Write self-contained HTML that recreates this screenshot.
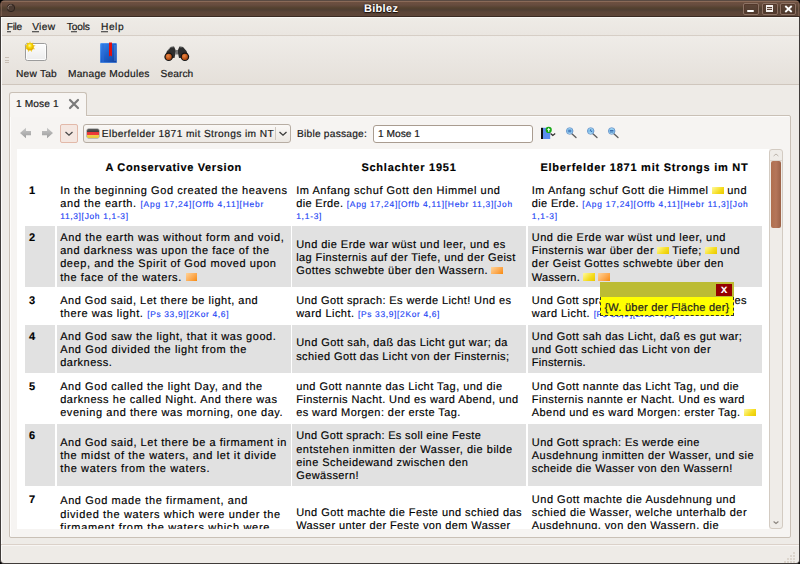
<!DOCTYPE html>
<html><head><meta charset="utf-8"><title>Biblez</title><style>
*{margin:0;padding:0;box-sizing:border-box}
html{background:#000}html,body{width:800px;height:564px;overflow:hidden}
body{position:relative;text-rendering:geometricPrecision;background:#000;font-family:"Liberation Sans",sans-serif;color:#1e1e1e}
.a{position:absolute}
.l{position:absolute;white-space:pre;font-size:11px;line-height:13px;color:#000;-webkit-text-stroke:0.15px currentColor}
.b{font-weight:bold}
.r{font-size:8.4px;color:#1c44f4}
i.iy,i.io{display:inline-block;width:11.5px;height:7.5px;vertical-align:baseline}
i.iy{background:linear-gradient(135deg,#fffaa0,#f5dc1e 60%,#e8c800)}
i.io{background:linear-gradient(135deg,#ffd49a,#fca74c 60%,#f78a10)}
.ui{position:absolute;white-space:pre;font-size:10.5px;line-height:12px;color:#1a1a1a;-webkit-text-stroke:0.2px currentColor}
#title{left:0;top:0;width:800px;height:17px;border-radius:5px 5px 0 0;
 background:linear-gradient(#5a4a42 0,#5a4a42 1px,#8a6a58 1px,#8a6a58 2px,#6e5040 2px,#664c3e 5px,#54412f 8px,#4f3e33 10px,#5b4437 12px,#5e4538 16px,#3a2a22 16px)}
#wl{left:0;top:17px;width:1px;height:547px;background:#3c3836}
#wr{left:799px;top:17px;width:1px;height:547px;background:#3c3836}
#wb{left:0;top:563px;width:800px;height:1px;background:#3c3836}
.wbtn{position:absolute;top:3px;width:16px;height:12px;border:1px solid #8c7264;border-radius:2px;background:linear-gradient(#5e4638,#4c382c);box-shadow:inset 0 0 0 1px #54392c}
#menu{left:1px;top:17px;width:798px;height:19px;background:linear-gradient(#f8f6f3 0,#f8f6f3 1px,#eeebe6 1px,#eae6e1 18px);border-bottom:1px solid #d6cec6}
#tbar{left:1px;top:36px;width:798px;height:49px;background:linear-gradient(#efece8,#e5e0da);border-bottom:1px solid #cfc6bd}
#tab{left:9px;top:92px;width:78px;height:24px;background:#f7f5f3;border:1px solid #c9c0b6;border-bottom:none;border-radius:3px 3px 0 0}
#nb{left:9px;top:115px;width:782px;height:423px;background:#f6f4f2;border:1px solid #c9c0b6;border-radius:0 2px 2px 2px;box-shadow:inset 1px 1px 0 #fdfcfb}
#tabfix{left:10px;top:115px;width:76px;height:2px;background:#f7f5f3}
#web{left:17px;top:149px;width:752px;height:380px;background:#fff;overflow:hidden}
.g{position:absolute;background:#e1e1e1}
#sb{left:769px;top:149px;width:14px;height:380px;background:#efece8;border:1px solid #d3cbc2;border-radius:3px}
#thumb{left:771px;top:161px;width:10px;height:67px;border-radius:2px;background:linear-gradient(90deg,#b0704f,#b5765a 50%,#9c6248)}
#combo{left:83px;top:124px;width:208px;height:19px;border:1px solid #b7ada3;border-radius:3px;background:linear-gradient(#faf8f6,#ece8e3)}
#dd{left:60px;top:124px;width:18px;height:19px;border:1px solid #e2b9a9;border-radius:2px;background:#f4e7e1}
#entry{left:373px;top:125px;width:160px;height:18px;border:1px solid #a99c90;border-radius:3px;background:#fff}
#status{left:1px;top:544px;width:798px;height:1px;background:#dbd1c9}
#tip{left:600px;top:282px;width:134px;height:34px}
</style></head><body>
<div class="a" style="left:0;top:10px;width:800px;height:554px;background:#eeebe7;border:1px solid #403c3a;border-top:none;border-radius:0 0 4px 4px"></div>
<div class="a" id="title"></div><div class="a" style="left:1px;top:3px;width:1px;height:13px;background:#7e6252;opacity:0.8"></div><div class="a" style="left:798px;top:3px;width:1px;height:13px;background:#7e6252;opacity:0.8"></div>
<svg class="a" style="left:5px;top:2px" width="12" height="12" viewBox="0 0 12 12"><circle cx="6" cy="6" r="3.7" fill="#4c3b32" stroke="#2e231e" stroke-width="1"/><path d="M3.2 7.2 A3 3 0 0 1 6.8 3.1" fill="none" stroke="#a8968c" stroke-width="0.9" opacity="0.8"/></svg>

<div class="wbtn" style="left:743px"><div class="a" style="left:3px;top:6px;width:7px;height:2px;border-radius:1px;background:#fff"></div></div>
<div class="wbtn" style="left:762px"><div class="a" style="left:3px;top:1px;width:7px;height:7px;border:1px solid #f4f0ee;border-top-width:2px;border-bottom-width:2px;background:#5a4236"><div class="a" style="left:0;top:1px;width:5px;height:1px;background:#d8ccc4"></div></div></div>
<div class="wbtn" style="left:780px"><svg class="a" style="left:3px;top:1px" width="9" height="8" viewBox="0 0 9 8"><path d="M1.3 1 L7.7 7 M7.7 1 L1.3 7" stroke="#fff" stroke-width="1.8"/></svg></div>


<div class="a" id="menu"></div>

<div class="a" style="left:7px;top:31px;width:4px;height:1px;background:#5a5a5a"></div><div class="a" style="left:7px;top:32px;width:4px;height:1px;background:#bdb8b2"></div><div class="a" style="left:32px;top:31px;width:7px;height:1px;background:#5a5a5a"></div><div class="a" style="left:32px;top:32px;width:7px;height:1px;background:#bdb8b2"></div><div class="a" style="left:71px;top:31px;width:6px;height:1px;background:#5a5a5a"></div><div class="a" style="left:71px;top:32px;width:6px;height:1px;background:#bdb8b2"></div><div class="a" style="left:101px;top:31px;width:7px;height:1px;background:#5a5a5a"></div><div class="a" style="left:101px;top:32px;width:7px;height:1px;background:#bdb8b2"></div>
<div class="a" id="tbar"></div>

<div class="a" id="nb"></div>
<div class="a" id="tab"></div>
<div class="a" id="tabfix"></div>

<div class="a" id="dd"></div>
<div class="a" id="combo"></div>
<div class="a" id="entry"></div>

<div class="a" id="web">
</div>
<div class="a" style="left:0;top:0;width:800px;height:564px;overflow:hidden;clip-path:inset(149px 31px 35px 17px)">
<div class="g" style="left:25px;top:226px;width:30px;height:61px"></div>
<div class="g" style="left:57px;top:226px;width:234px;height:61px"></div>
<div class="g" style="left:292px;top:226px;width:234px;height:61px"></div>
<div class="g" style="left:528px;top:226px;width:234px;height:61px"></div>
<div class="g" style="left:25px;top:325px;width:30px;height:48px"></div>
<div class="g" style="left:57px;top:325px;width:234px;height:48px"></div>
<div class="g" style="left:292px;top:325px;width:234px;height:48px"></div>
<div class="g" style="left:528px;top:325px;width:234px;height:48px"></div>
<div class="g" style="left:25px;top:424px;width:30px;height:62px"></div>
<div class="g" style="left:57px;top:424px;width:234px;height:62px"></div>
<div class="g" style="left:292px;top:424px;width:234px;height:62px"></div>
<div class="g" style="left:528px;top:424px;width:234px;height:62px"></div>
<div class="l b" style="left:105.5px;top:162.4px;letter-spacing:0.633px">A Conservative Version</div><div class="l b" style="left:361.4px;top:162.4px;letter-spacing:0.764px">Schlachter 1951</div><div class="l b" style="left:540.4px;top:162.4px;letter-spacing:0.746px">Elberfelder 1871 mit Strongs im NT</div><div class="l b" style="left:29px;top:185.2px">1</div><div class="l b" style="left:29px;top:232.1px">2</div><div class="l b" style="left:29px;top:295.0px">3</div><div class="l b" style="left:29px;top:330.8px">4</div><div class="l b" style="left:29px;top:380.8px">5</div><div class="l b" style="left:29px;top:430.4px">6</div><div class="l b" style="left:29px;top:493.8px">7</div><div class="l" style="left:60.2px;top:185.2px"><span style="letter-spacing:0.563px">In the beginning God created the heavens</span></div><div class="l" style="left:60.2px;top:198.4px"><span style="letter-spacing:0.617px">and the earth. </span><span class="r" style="letter-spacing:0.817px">[Apg 17,24][Offb 4,11][Hebr</span></div><div class="l" style="left:60.2px;top:210.3px"><span class="r" style="letter-spacing:0.685px">11,3][Joh 1,1-3]</span></div><div class="l" style="left:296.2px;top:185.2px"><span style="letter-spacing:0.526px">Im Anfang schuf Gott den Himmel und</span></div><div class="l" style="left:296.2px;top:198.4px"><span style="letter-spacing:0.343px">die Erde. </span><span class="r" style="letter-spacing:0.768px">[Apg 17,24][Offb 4,11][Hebr 11,3][Joh</span></div><div class="l" style="left:296.2px;top:210.3px"><span class="r" style="letter-spacing:0.766px">1,1-3]</span></div><div class="l" style="left:531.8px;top:185.2px"><span style="letter-spacing:0.515px">Im Anfang schuf Gott die Himmel </span><i class="iy"></i><span style="letter-spacing:0.537px"> und</span></div><div class="l" style="left:531.8px;top:198.4px"><span style="letter-spacing:0.343px">die Erde. </span><span class="r" style="letter-spacing:0.768px">[Apg 17,24][Offb 4,11][Hebr 11,3][Joh</span></div><div class="l" style="left:531.8px;top:210.3px"><span class="r" style="letter-spacing:0.766px">1,1-3]</span></div><div class="l" style="left:60.2px;top:232.0px"><span style="letter-spacing:0.620px">And the earth was without form and void,</span></div><div class="l" style="left:60.2px;top:245.2px"><span style="letter-spacing:0.553px">and darkness was upon the face of the</span></div><div class="l" style="left:60.2px;top:258.4px"><span style="letter-spacing:0.560px">deep, and the Spirit of God moved upon</span></div><div class="l" style="left:60.2px;top:271.6px"><span style="letter-spacing:0.584px">the face of the waters. </span><i class="io"></i></div><div class="l" style="left:296.2px;top:238.6px"><span style="letter-spacing:0.460px">Und die Erde war wüst und leer, und es</span></div><div class="l" style="left:296.2px;top:251.8px"><span style="letter-spacing:0.413px">lag Finsternis auf der Tiefe, und der Geist</span></div><div class="l" style="left:296.2px;top:265.0px"><span style="letter-spacing:0.432px">Gottes schwebte über den Wassern. </span><i class="io"></i></div><div class="l" style="left:531.8px;top:232.0px"><span style="letter-spacing:0.478px">Und die Erde war wüst und leer, und</span></div><div class="l" style="left:531.8px;top:245.2px"><span style="letter-spacing:0.422px">Finsternis war über der </span><i class="iy"></i><span style="letter-spacing:0.404px"> Tiefe; </span><i class="iy"></i><span style="letter-spacing:0.537px"> und</span></div><div class="l" style="left:531.8px;top:258.4px"><span style="letter-spacing:0.471px">der Geist Gottes schwebte über den</span></div><div class="l" style="left:531.8px;top:271.6px"><span style="letter-spacing:0.274px">Wassern. </span><i class="iy"></i><span style="letter-spacing:0.318px"> </span><i class="io"></i></div><div class="l" style="left:60.2px;top:295.0px"><span style="letter-spacing:0.510px">And God said, Let there be light, and</span></div><div class="l" style="left:60.2px;top:308.2px"><span style="letter-spacing:0.583px">there was light. </span><span class="r" style="letter-spacing:0.667px">[Ps 33,9][2Kor 4,6]</span></div><div class="l" style="left:296.2px;top:295.0px"><span style="letter-spacing:0.408px">Und Gott sprach: Es werde Licht! Und es</span></div><div class="l" style="left:296.2px;top:308.2px"><span style="letter-spacing:0.465px">ward Licht. </span><span class="r" style="letter-spacing:0.667px">[Ps 33,9][2Kor 4,6]</span></div><div class="l" style="left:531.8px;top:295.0px"><span style="letter-spacing:0.408px">Und Gott sprach: Es werde Licht! Und es</span></div><div class="l" style="left:531.8px;top:308.2px"><span style="letter-spacing:0.465px">ward Licht. </span><span class="r" style="letter-spacing:0.667px">[Ps 33,9][2Kor 4,6]</span></div><div class="l" style="left:60.2px;top:330.8px"><span style="letter-spacing:0.559px">And God saw the light, that it was good.</span></div><div class="l" style="left:60.2px;top:344.0px"><span style="letter-spacing:0.603px">And God divided the light from the</span></div><div class="l" style="left:60.2px;top:357.2px"><span style="letter-spacing:0.493px">darkness.</span></div><div class="l" style="left:296.2px;top:337.4px"><span style="letter-spacing:0.442px">Und Gott sah, daß das Licht gut war; da</span></div><div class="l" style="left:296.2px;top:350.6px"><span style="letter-spacing:0.415px">schied Gott das Licht von der Finsternis;</span></div><div class="l" style="left:531.8px;top:330.8px"><span style="letter-spacing:0.428px">Und Gott sah das Licht, daß es gut war;</span></div><div class="l" style="left:531.8px;top:344.0px"><span style="letter-spacing:0.466px">und Gott schied das Licht von der</span></div><div class="l" style="left:531.8px;top:357.2px"><span style="letter-spacing:0.295px">Finsternis.</span></div><div class="l" style="left:60.2px;top:380.8px"><span style="letter-spacing:0.572px">And God called the light Day, and the</span></div><div class="l" style="left:60.2px;top:394.0px"><span style="letter-spacing:0.540px">darkness he called Night. And there was</span></div><div class="l" style="left:60.2px;top:407.2px"><span style="letter-spacing:0.566px">evening and there was morning, one day.</span></div><div class="l" style="left:296.2px;top:380.8px"><span style="letter-spacing:0.461px">und Gott nannte das Licht Tag, und die</span></div><div class="l" style="left:296.2px;top:394.0px"><span style="letter-spacing:0.408px">Finsternis Nacht. Und es ward Abend, und</span></div><div class="l" style="left:296.2px;top:407.2px"><span style="letter-spacing:0.418px">es ward Morgen: der erste Tag.</span></div><div class="l" style="left:531.8px;top:380.8px"><span style="letter-spacing:0.441px">Und Gott nannte das Licht Tag, und die</span></div><div class="l" style="left:531.8px;top:394.0px"><span style="letter-spacing:0.416px">Finsternis nannte er Nacht. Und es ward</span></div><div class="l" style="left:531.8px;top:407.2px"><span style="letter-spacing:0.426px">Abend und es ward Morgen: erster Tag. </span><i class="iy"></i></div><div class="l" style="left:60.2px;top:437.0px"><span style="letter-spacing:0.546px">And God said, Let there be a firmament in</span></div><div class="l" style="left:60.2px;top:450.2px"><span style="letter-spacing:0.630px">the midst of the waters, and let it divide</span></div><div class="l" style="left:60.2px;top:463.4px"><span style="letter-spacing:0.639px">the waters from the waters.</span></div><div class="l" style="left:296.2px;top:430.4px"><span style="letter-spacing:0.341px">Und Gott sprach: Es soll eine Feste</span></div><div class="l" style="left:296.2px;top:443.6px"><span style="letter-spacing:0.530px">entstehen inmitten der Wasser, die bilde</span></div><div class="l" style="left:296.2px;top:456.8px"><span style="letter-spacing:0.433px">eine Scheidewand zwischen den</span></div><div class="l" style="left:296.2px;top:470.0px"><span style="letter-spacing:0.401px">Gewässern!</span></div><div class="l" style="left:531.8px;top:437.0px"><span style="letter-spacing:0.406px">Und Gott sprach: Es werde eine</span></div><div class="l" style="left:531.8px;top:450.2px"><span style="letter-spacing:0.490px">Ausdehnung inmitten der Wasser, und sie</span></div><div class="l" style="left:531.8px;top:463.4px"><span style="letter-spacing:0.398px">scheide die Wasser von den Wassern!</span></div><div class="l" style="left:60.2px;top:495.3px"><span style="letter-spacing:0.615px">And God made the firmament, and</span></div><div class="l" style="left:60.2px;top:508.5px"><span style="letter-spacing:0.623px">divided the waters which were under the</span></div><div class="l" style="left:60.2px;top:521.7px"><span style="letter-spacing:0.666px">firmament from the waters which were</span></div><div class="l" style="left:296.2px;top:507.0px"><span style="letter-spacing:0.431px">Und Gott machte die Feste und schied das</span></div><div class="l" style="left:296.2px;top:520.2px"><span style="letter-spacing:0.397px">Wasser unter der Feste von dem Wasser</span></div><div class="l" style="left:531.8px;top:493.5px"><span style="letter-spacing:0.516px">Und Gott machte die Ausdehnung und</span></div><div class="l" style="left:531.8px;top:506.7px"><span style="letter-spacing:0.465px">schied die Wasser, welche unterhalb der</span></div><div class="l" style="left:531.8px;top:519.9px"><span style="letter-spacing:0.417px">Ausdehnung, von den Wassern, die</span></div>
</div>
<div class="a" id="sb"></div>
<div class="a" id="thumb"></div>

<div class="a" id="tip">
 <div class="a" style="left:0;top:0;width:134px;height:16px;background:#bcbc34"></div>
 <div class="a" style="left:0;top:15px;width:134px;height:19px;background:#ffff00;border:1px dashed #333;border-top:none"></div>
 <div class="a" style="left:116px;top:2px;width:16px;height:12px;background:#950000;color:#fff;font-weight:bold;font-size:12px;line-height:11px;text-align:center">x</div>
</div>


<!-- toolbar grip -->
<div class="a" style="left:5px;top:57px;width:4px;height:1px;background:#c9bfb5"></div>
<div class="a" style="left:5px;top:60px;width:4px;height:1px;background:#c9bfb5"></div>
<div class="a" style="left:5px;top:62px;width:4px;height:1px;background:#c9bfb5"></div>
<div class="a" style="left:1px;top:17px;width:1px;height:543px;background:#fbfaf9"></div>
<!-- new tab icon -->
<svg class="a" style="left:22px;top:38px" width="28" height="26" viewBox="0 0 28 26">
 <defs><linearGradient id="ntg" x1="0" y1="0" x2="0" y2="1"><stop offset="0" stop-color="#fdfdfd"/><stop offset="1" stop-color="#ececec"/></linearGradient>
 <radialGradient id="sun" cx="0.45" cy="0.35" r="0.6"><stop offset="0" stop-color="#fff6a0"/><stop offset="0.5" stop-color="#f8d800"/><stop offset="1" stop-color="#e0a800"/></radialGradient></defs>
 <rect x="3.5" y="5.5" width="21" height="17" rx="2" fill="url(#ntg)" stroke="#9c9c9c" stroke-width="1"/>
 <rect x="4.5" y="6.5" width="19" height="15" rx="1" fill="none" stroke="#ffffff" stroke-width="0.8"/>
 <g transform="translate(0.3,1)"><path d="M7.7 2 L8.6 4.6 L11 3.4 L10.6 6 L13.3 6.4 L11.2 8 L12.7 10.3 L10 10.2 L9.6 12.9 L7.7 11 L5.8 12.9 L5.4 10.2 L2.7 10.3 L4.2 8 L2.1 6.4 L4.8 6 L4.4 3.4 L6.8 4.6 Z" fill="#f0c000" opacity="0.8"/>
 <circle cx="7.7" cy="7.7" r="3.6" fill="url(#sun)"/></g>
</svg>
<!-- book icon -->
<svg class="a" style="left:99px;top:42px" width="20" height="22" viewBox="0 0 20 22">
 <defs><linearGradient id="bkg" x1="0" y1="0" x2="1" y2="1"><stop offset="0" stop-color="#3a8af0"/><stop offset="0.5" stop-color="#1d5fc9"/><stop offset="1" stop-color="#123f9a"/></linearGradient></defs>
 <rect x="1" y="1" width="17" height="20" rx="1.5" fill="url(#bkg)"/>
 <rect x="1.5" y="1.5" width="16" height="19" rx="1" fill="none" stroke="#6aa8f8" stroke-width="0.7" opacity="0.7"/>
 <line x1="4" y1="2" x2="4" y2="20" stroke="#2d6ad8" stroke-width="1"/>
 <line x1="16" y1="3" x2="16" y2="19" stroke="#8ab8f0" stroke-width="0.8" opacity="0.6"/>
 <path d="M10 0.5 H13 V14.6 L11.5 13.4 L10 14.6 Z" fill="#e01010"/>
</svg>
<!-- binoculars -->
<svg class="a" style="left:163px;top:45px" width="28" height="17" viewBox="0 0 28 17">
 <defs><radialGradient id="lg" cx="0.4" cy="0.35" r="0.7"><stop offset="0" stop-color="#e88848"/><stop offset="0.6" stop-color="#c45a1c"/><stop offset="1" stop-color="#8a3a10"/></radialGradient></defs>
 <path d="M7.5 2 L11 1.5 L13 6 L11.5 13 L1.5 12.5 L4 6 Z" fill="#2e2e2e"/>
 <path d="M20 2 L16.5 1.5 L14.5 6 L16 13 L26 12.5 L23.5 6 Z" fill="#2e2e2e"/>
 <rect x="12.5" y="5" width="2.5" height="4.5" fill="#777"/>
 <path d="M4.2 6.2 L7.6 2.2" stroke="#a8a8a8" stroke-width="1" opacity="0.7"/>
 <path d="M16.8 2.2 L19.6 2.2" stroke="#888" stroke-width="1" opacity="0.6"/>
 <path d="M7.8 2.2 L10.6 2.2" stroke="#888" stroke-width="1" opacity="0.6"/>
 <circle cx="5.7" cy="11.7" r="4.3" fill="#141414"/>
 <circle cx="21.9" cy="11.7" r="4.3" fill="#141414"/>
 <circle cx="5.7" cy="11.9" r="3.1" fill="url(#lg)"/>
 <circle cx="21.9" cy="11.9" r="3.1" fill="url(#lg)"/>
</svg>
<!-- tab close -->
<svg class="a" style="left:68px;top:98px" width="12" height="12" viewBox="0 0 12 12"><path d="M2 2 L10 10 M10 2 L2 10" stroke="#7a7a7a" stroke-width="2.2" stroke-linecap="round"/></svg>
<!-- nav arrows -->
<svg class="a" style="left:19px;top:127px" width="14" height="12" viewBox="0 0 14 12"><defs><linearGradient id="arg" x1="0" y1="0" x2="0" y2="1"><stop offset="0" stop-color="#c8c8c8"/><stop offset="1" stop-color="#9c9c9c"/></linearGradient></defs>
 <path d="M1 6 L7 0.8 L7 4 L12 4 L12 8.2 L7 8.2 L7 11.2 Z" fill="url(#arg)"/></svg>
<svg class="a" style="left:40px;top:127px" width="14" height="12" viewBox="0 0 14 12">
 <path d="M13 6 L7 0.8 L7 4 L2 4 L2 8.2 L7 8.2 L7 11.2 Z" fill="url(#arg)"/></svg>
<!-- dd chevron -->
<svg class="a" style="left:64px;top:130px" width="10" height="8" viewBox="0 0 10 8"><path d="M1.5 2 L5 5.2 L8.5 2" fill="none" stroke="#4a4a4a" stroke-width="1.3"/></svg>
<!-- flag -->
<div class="a" style="left:87px;top:129px;width:12px;height:9px;border-radius:1.5px;overflow:hidden;background:linear-gradient(#5a5a5a 0,#3c3c3c 3px,#e83838 3px,#f03c3c 6px,#f0d050 6px,#e8c838 9px);box-shadow:0 0 0 0.5px #888"></div>
<!-- combo separator + chevron -->
<div class="a" style="left:275px;top:127px;width:1px;height:13px;background:#cfc7bf"></div>
<svg class="a" style="left:278px;top:130px" width="10" height="8" viewBox="0 0 10 8"><path d="M1.5 2 L5 5.2 L8.5 2" fill="none" stroke="#3a3a3a" stroke-width="1.3"/></svg>
<!-- book add icon -->
<svg class="a" style="left:540px;top:126px" width="18" height="14" viewBox="0 0 18 14">
 <rect x="1" y="1.8" width="2" height="11.2" fill="#101010"/>
 <rect x="3" y="1.8" width="7.2" height="11.2" fill="#5b8ef0"/>
 <circle cx="8.7" cy="3.9" r="3.1" fill="#18a818"/>
 <path d="M8.7 1.8 L10.4 4 L9.3 4 L9.3 5.8 L8.1 5.8 L8.1 4 L7 4 Z" fill="#e8ffe8"/>
 <path d="M10.6 7.5 L12.8 9.5 L15.2 7.5" fill="none" stroke="#303030" stroke-width="1.2"/>
</svg>
<!-- zoom icons -->
<svg class="a" style="left:565px;top:127px" width="56" height="13" viewBox="0 0 56 13">
 <defs><linearGradient id="lens" x1="0" y1="0" x2="0" y2="1"><stop offset="0" stop-color="#b4e6fb"/><stop offset="0.5" stop-color="#78b8e8"/><stop offset="1" stop-color="#c0ecfc"/></linearGradient></defs>
 <g><line x1="6.6" y1="6.6" x2="11" y2="10.6" stroke="#5c5c5c" stroke-width="1.3" stroke-linecap="round"/><circle cx="4.7" cy="4" r="3.3" fill="url(#lens)" stroke="#5a84c0" stroke-width="0.7"/><rect x="3.2" y="2.6" width="3" height="2.8" fill="#3a6ab0" opacity="0.7"/></g>
 <g transform="translate(21,0)"><line x1="6.6" y1="6.6" x2="11" y2="10.6" stroke="#5c5c5c" stroke-width="1.3" stroke-linecap="round"/><circle cx="4.7" cy="4" r="3.3" fill="url(#lens)" stroke="#5a84c0" stroke-width="0.7"/><path d="M4.7 2.2 L4.7 4 L6.2 5" stroke="#2a5aa0" stroke-width="0.8" fill="none"/></g>
 <g transform="translate(42,0)"><line x1="6.6" y1="6.6" x2="11" y2="10.6" stroke="#5c5c5c" stroke-width="1.3" stroke-linecap="round"/><circle cx="4.7" cy="4" r="3.3" fill="url(#lens)" stroke="#5a84c0" stroke-width="0.7"/><rect x="3" y="3" width="3.4" height="0.8" fill="#2a5aa0"/><rect x="3" y="4.6" width="3.4" height="0.8" fill="#2a5aa0"/></g>
</svg>
<!-- scrollbar arrows -->
<svg class="a" style="left:771px;top:151px" width="10" height="8" viewBox="0 0 10 8"><path d="M2.6 5 L5 3 L7.4 5" fill="none" stroke="#bdb5ad" stroke-width="1"/></svg>
<svg class="a" style="left:771px;top:519px" width="10" height="8" viewBox="0 0 10 8"><path d="M2.6 2.5 L5 4.5 L7.4 2.5" fill="none" stroke="#8a847e" stroke-width="1.1"/></svg>
<div class="a" style="left:770px;top:160px;width:12px;height:1px;background:#ddd6ce"></div>

<div class="a" id="status"></div><div class="a" style="left:1px;top:545px;width:798px;height:1px;background:#f8f6f4"></div><div class="a" style="left:793px;top:552px;width:2px;height:2px;background:#dcd5cd"></div><div class="a" style="left:790px;top:555px;width:2px;height:2px;background:#dcd5cd"></div><div class="a" style="left:793px;top:555px;width:2px;height:2px;background:#dcd5cd"></div><div class="a" style="left:787px;top:558px;width:2px;height:2px;background:#dcd5cd"></div><div class="a" style="left:790px;top:558px;width:2px;height:2px;background:#dcd5cd"></div><div class="a" style="left:793px;top:558px;width:2px;height:2px;background:#dcd5cd"></div><div class="a" style="left:784px;top:561px;width:2px;height:2px;background:#dcd5cd"></div><div class="a" style="left:787px;top:561px;width:2px;height:2px;background:#dcd5cd"></div><div class="a" style="left:790px;top:561px;width:2px;height:2px;background:#dcd5cd"></div><div class="a" style="left:793px;top:561px;width:2px;height:2px;background:#dcd5cd"></div>
<div class="ui" style="left:6.80px;top:22.10px;font-size:10.20px;letter-spacing:-0.333px">File</div><div class="ui" style="left:32.20px;top:22.10px;font-size:10.20px;letter-spacing:0.300px">View</div><div class="ui" style="left:66.70px;top:22.10px;font-size:10.20px;letter-spacing:-0.125px">Tools</div><div class="ui" style="left:101.10px;top:22.10px;font-size:10.20px;letter-spacing:0.500px">Help</div><div class="ui" style="left:16.00px;top:68.70px;font-size:10.20px;letter-spacing:0.217px">New Tab</div><div class="ui" style="left:67.90px;top:68.70px;font-size:10.20px;letter-spacing:0.262px">Manage Modules</div><div class="ui" style="left:160.60px;top:68.70px;font-size:10.20px;letter-spacing:0.080px">Search</div><div class="ui" style="left:16.00px;top:98.80px;font-size:10.20px;letter-spacing:0.107px">1 Mose 1</div><div class="ui" style="left:101.80px;top:129.10px;font-size:10.20px;letter-spacing:0.385px">Elberfelder 1871 mit Strongs im NT</div><div class="ui" style="left:297.00px;top:129.10px;font-size:10.20px;letter-spacing:0.231px">Bible passage:</div><div class="ui" style="left:378.00px;top:129.10px;font-size:10.20px;letter-spacing:0.000px">1 Mose 1</div><div class="ui b" style="left:364.00px;top:2.80px;font-size:11.00px;letter-spacing:0.300px;color:#fff;text-shadow:0 0 2px #1a100a,0 1px 1px #1a100a;-webkit-text-stroke:0">Biblez</div>
<div class="a" style="left:0;top:0"><div class="ui" style="left:604.40px;top:301.50px;font-size:11.00px;letter-spacing:0.243px;color:#222">{W. über der Fläche der}</div></div>
</body></html>
